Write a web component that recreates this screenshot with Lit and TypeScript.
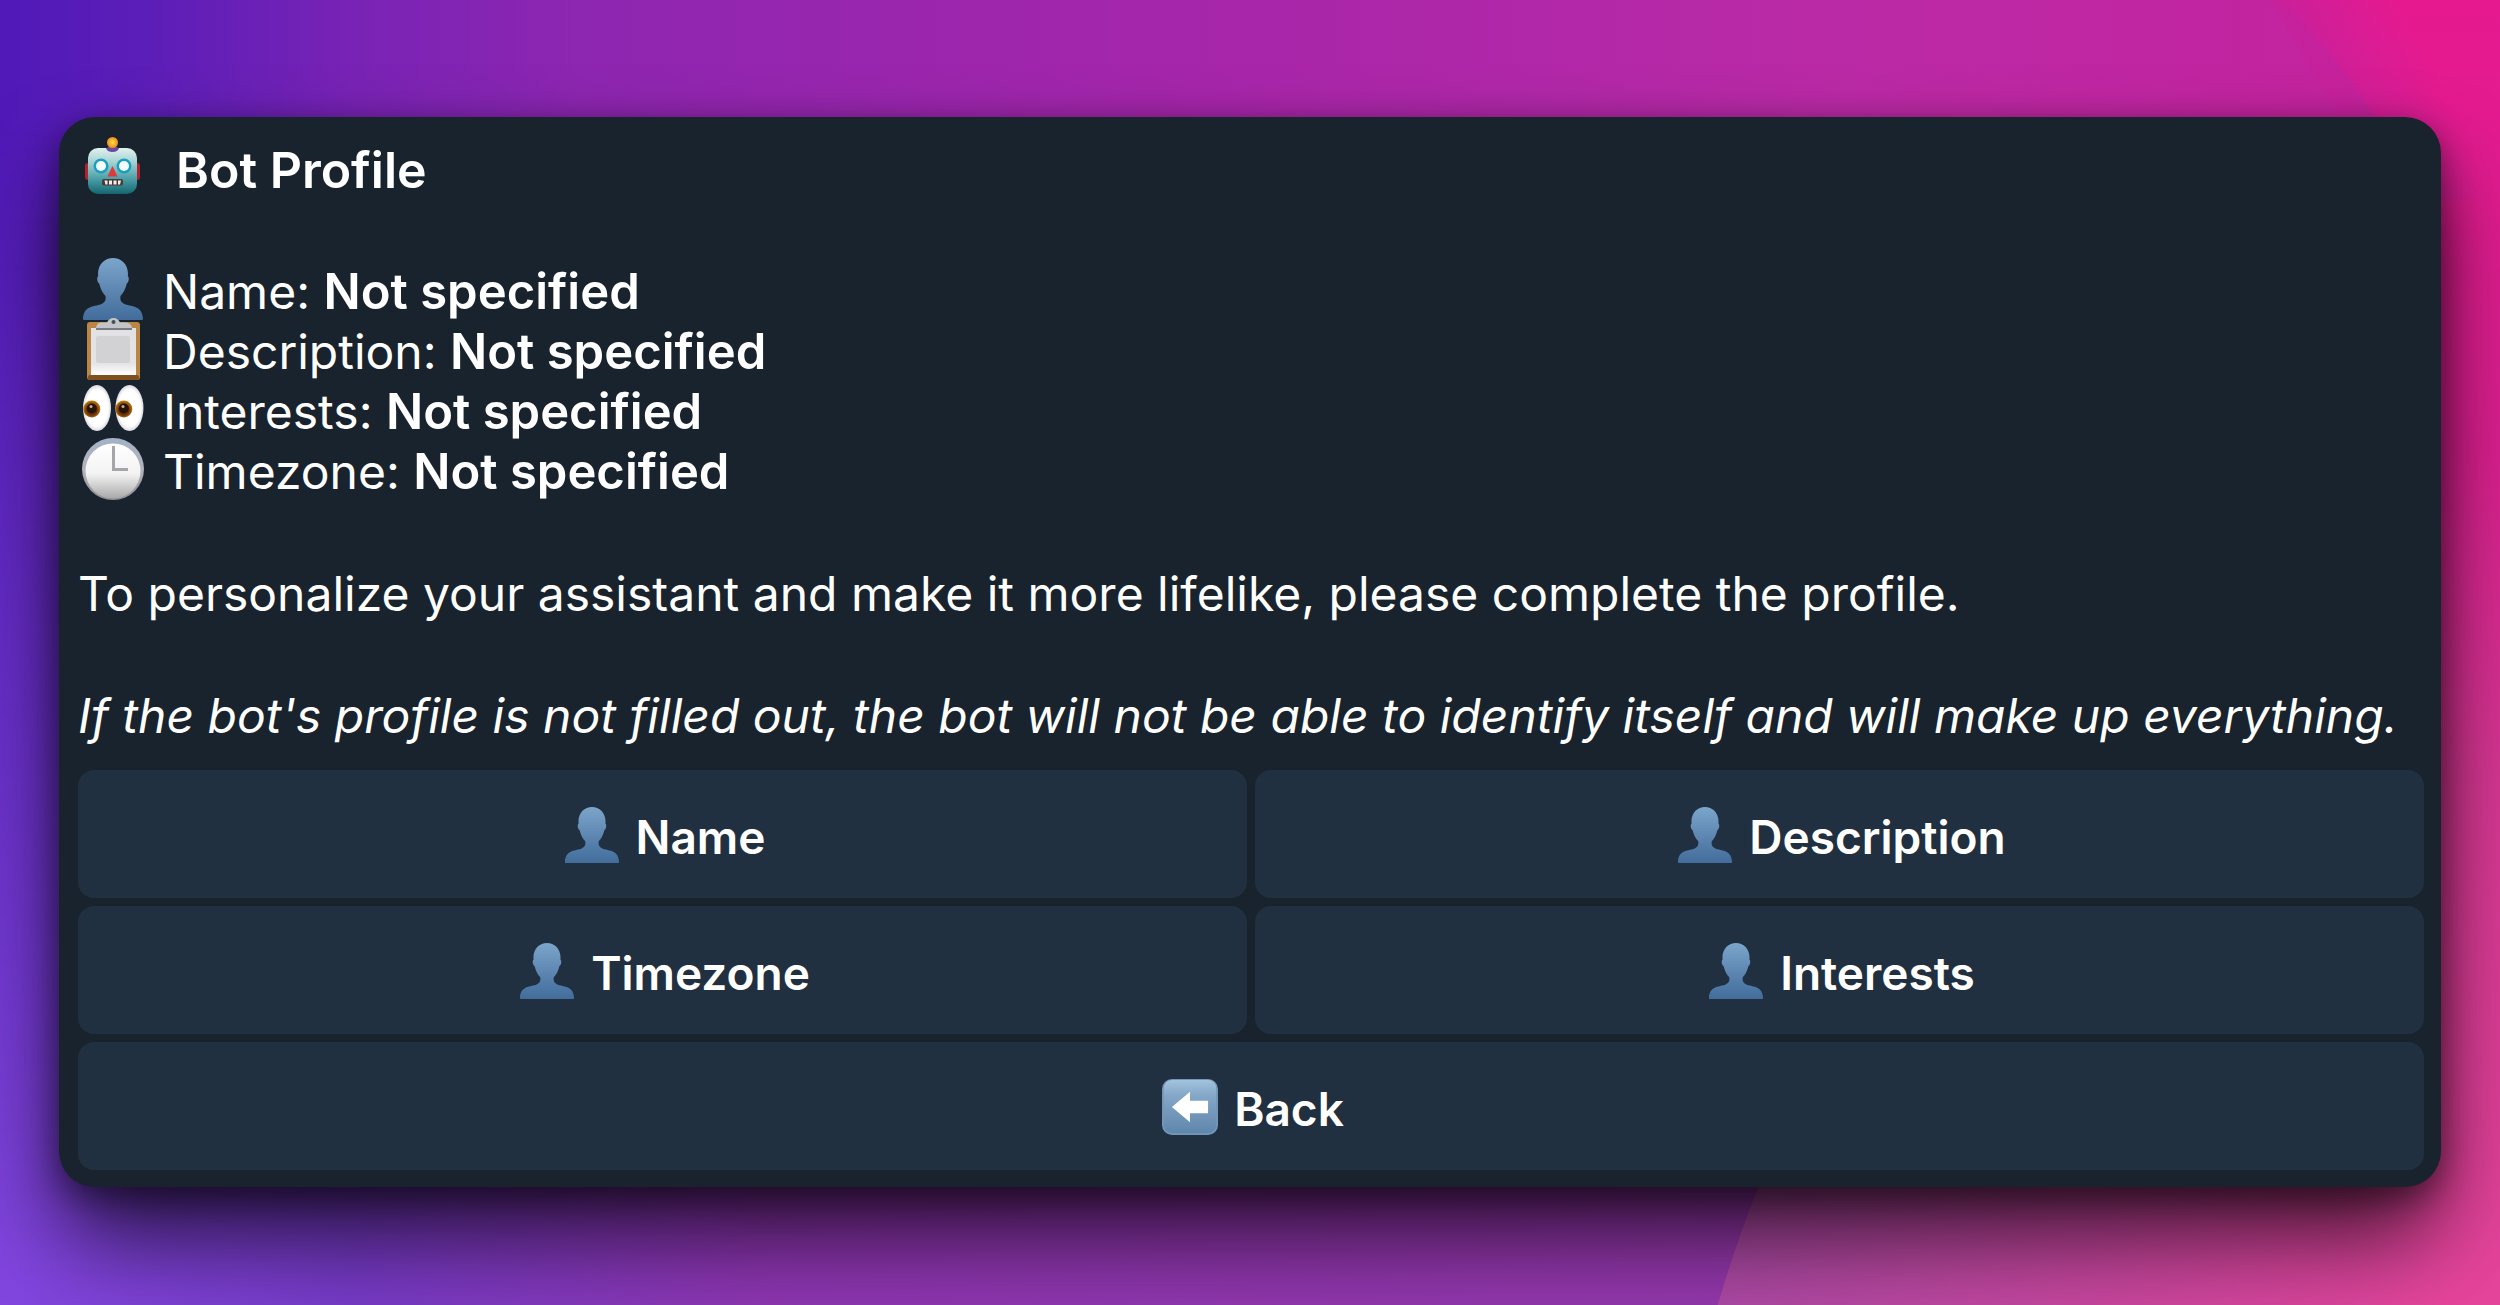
import { LitElement, html, svg, css, TemplateResult } from "lit";
import { customElement, property } from "lit/decorators.js";

type IconName = "robot" | "person" | "clipboard" | "eyes" | "clock" | "back";

/* Every glyph is drawn on a 62 x 62 grid. */
const icons: Record<IconName, TemplateResult> = {
  robot: svg`
    <defs>
      <linearGradient id="head" x1="0" y1="0" x2="0" y2="1">
        <stop offset="0" stop-color="#e2f1ee" /><stop offset=".3" stop-color="#a5d3d3" />
        <stop offset=".65" stop-color="#4fa3aa" /><stop offset="1" stop-color="#14656f" />
      </linearGradient>
      <radialGradient id="knob" cx=".5" cy=".5" r=".5">
        <stop offset="0" stop-color="#ffe24a" /><stop offset="1" stop-color="#f08a1c" />
      </radialGradient>
    </defs>
    <rect x="3" y="27" width="8" height="17" rx="3" fill="#b3202e" />
    <rect x="50" y="27" width="8" height="17" rx="3" fill="#b3202e" />
    <path d="M24 15q0-5 6.500-5t6.500 5z" fill="#6a4a9c" />
    <circle cx="30.500" cy="6.500" r="5.500" fill="url(#knob)" />
    <rect x="6" y="12" width="49" height="46" rx="10" fill="url(#head)" />
    <path d="M24 12h13q-1 4-6.500 4t-6.500-4z" fill="#6a4a9c" />
    <circle cx="19" cy="30" r="7.500" fill="#1b9fc0" /><circle cx="19" cy="30" r="5" fill="#f4feff" />
    <circle cx="42" cy="30" r="7.500" fill="#1b9fc0" /><circle cx="42" cy="30" r="5" fill="#f4feff" />
    <path d="M30.500 30l5 10.500h-10z" fill="#e0393c" />
    <rect x="20" y="43" width="21" height="6.500" rx="2" fill="#4a3a3c" />
    <path d="M22.500 44.500h3v4h-2zM27 44.500h3v4h-3zM31.500 44.500h3v4h-3zM36 44.500h3l-1 4h-2z" fill="#f6efe6" />`,
  person: svg`
    <defs>
      <linearGradient id="body" x1="0" y1="0" x2="0" y2="1">
        <stop offset="0" stop-color="#7ba5ca" /><stop offset="1" stop-color="#426c9b" />
      </linearGradient>
    </defs>
    <path fill="url(#body)" d="M31 0C39 0 46 6 46 16q0 1-.2 2.200c1.600.6 1.200 6.300-1 7.300C43.500 31 41 35.500 38.500 38c-.6 4.500.5 6.500 5 8.500 7 2 17 1.500 17.500 14.500q0 1-1 1H2q-1 0-1-1C1.500 48 11.500 48.500 18.500 46.500c4.500-2 5.600-4 5-8.500C21 35.500 18.500 31 17.200 25.500c-2.200-1-2.600-6.700-1-7.300Q16 17 16 16C16 6 23 0 31 0z" />`,
  clipboard: svg`
    <defs>
      <linearGradient id="sheet" x1="0" y1="0" x2="0" y2="1">
        <stop offset="0" stop-color="#e2e2e4" /><stop offset=".75" stop-color="#e4e4e6" /><stop offset="1" stop-color="#ffffff" />
      </linearGradient>
    </defs>
    <rect x="5" y="4" width="53" height="58" rx="3" fill="#b98645" />
    <rect x="6" y="57" width="51" height="5" rx="2" fill="#80501f" />
    <rect x="9" y="10" width="45" height="47" fill="url(#sheet)" />
    <rect x="14" y="18" width="34" height="27" rx="2" fill="#d2d2d4" />
    <path d="M14 11q0-6 5-6.500h6Q27 0 31.500 0T38 4.500h6q6 .5 6 6.500z" fill="#c3c5c9" />
    <rect x="14" y="10" width="36" height="2" fill="#777b82" />
    <circle cx="31.500" cy="4" r="2" fill="#4a5058" />`,
  eyes: svg`
    <defs>
      <radialGradient id="iris" cx=".5" cy=".55" r=".55">
        <stop offset="0" stop-color="#5a2a08" /><stop offset=".55" stop-color="#6b3305" /><stop offset="1" stop-color="#c9820f" />
      </radialGradient>
      <radialGradient id="white"><stop offset=".8" stop-color="#ffffff" /><stop offset="1" stop-color="#d9d9df" /></radialGradient>
    </defs>
    <ellipse cx="15" cy="30" rx="14" ry="23" fill="url(#white)" />
    <ellipse cx="47.500" cy="30" rx="14" ry="23" fill="url(#white)" />
    <circle cx="9.800" cy="31" r="8.500" fill="url(#iris)" /><circle cx="9.800" cy="30.500" r="5" fill="#26130a" />
    <circle cx="41.800" cy="31" r="8.500" fill="url(#iris)" /><circle cx="41.800" cy="30.500" r="5" fill="#26130a" />
    <circle cx="9" cy="28.500" r="1.500" fill="#c9ab93" /><circle cx="41" cy="28.500" r="1.500" fill="#c9ab93" />`,
  clock: svg`
    <defs>
      <linearGradient id="rim" x1="0" y1="0" x2="0" y2="1">
        <stop offset="0" stop-color="#a3b1c8" /><stop offset=".5" stop-color="#b4b4b9" /><stop offset="1" stop-color="#8f8f92" />
      </linearGradient>
      <linearGradient id="dial" x1="0" y1="0" x2="0" y2="1">
        <stop offset="0" stop-color="#ffffff" /><stop offset=".55" stop-color="#f3f3f3" /><stop offset="1" stop-color="#a9a9ab" />
      </linearGradient>
    </defs>
    <circle cx="31" cy="31" r="31" fill="url(#rim)" />
    <circle cx="31" cy="33" r="27.500" fill="url(#dial)" />
    <path d="M31.500 8v23.500H46" fill="none" stroke="#a6a6aa" stroke-width="3" />`,
  back: svg`
    <defs>
      <linearGradient id="tile" x1="0" y1="0" x2="0" y2="1">
        <stop offset="0" stop-color="#a3c3de" /><stop offset=".3" stop-color="#84a7c8" /><stop offset="1" stop-color="#5f86ac" />
      </linearGradient>
    </defs>
    <rect x="0" y="0" width="62" height="62" rx="11" fill="#7496b8" />
    <rect x="2" y="1" width="58" height="59" rx="9" fill="url(#tile)" />
    <path d="M11 31L31 14V24H51V38H31V48z" fill="#ffffff" />`,
};

@customElement("emoji-icon")
class EmojiIcon extends LitElement {
  @property() name: IconName = "person";

  static styles = css`
    :host { display: block; flex: none; }
    svg { display: block; width: 100%; height: 100%; }
  `;

  render() {
    return html`<svg viewBox="0 0 62 62" aria-hidden="true">${icons[this.name]}</svg>`;
  }
}

const fields: { icon: IconName; label: string; value: string }[] = [
  { icon: "person", label: "Name", value: "Not specified" },
  { icon: "clipboard", label: "Description", value: "Not specified" },
  { icon: "eyes", label: "Interests", value: "Not specified" },
  { icon: "clock", label: "Timezone", value: "Not specified" },
];

const actions: { icon: IconName; label: string; wide?: boolean }[] = [
  { icon: "person", label: "Name" },
  { icon: "person", label: "Description" },
  { icon: "person", label: "Timezone" },
  { icon: "person", label: "Interests" },
  { icon: "back", label: "Back", wide: true },
];

@customElement("app-root")
class AppRoot extends LitElement {
  static styles = css`
    :host {
      display: block;
      font-family: Inter, "Liberation Sans", sans-serif;
    }
    .stage {
      position: relative;
      isolation: isolate;
      box-sizing: border-box;
      min-height: 100vh;
      padding: 117px 59px;
      overflow: hidden;
    }
    .wallpaper {
      position: absolute;
      inset: 0;
      width: 100%;
      height: 100%;
      z-index: -1;
    }
    .card {
      padding: 23px 17px 17px 19px;
      border-radius: 36px;
      background: #19232d;
      color: #ffffff;
      box-shadow: 0 54px 92px -4px rgba(0, 0, 0, 0.7), 0 10px 32px rgba(0, 0, 0, 0.45);
    }
    .message {
      display: flex;
      flex-direction: column;
      gap: 62px;
      font-size: 48px;
      line-height: 60px;
    }
    .title, .field {
      display: flex;
      align-items: center;
      height: 60px;
      margin: 0;
      padding-left: 4px;
      gap: 19px;
      font-size: 48px;
      font-weight: 400;
    }
    .title { gap: 32px; font-size: 50px; font-weight: 600; }
    .fields { margin: 0; padding: 0; list-style: none; }
    .mark { width: 62px; height: 62px; margin-bottom: 6px; }
    .text { margin: 0; }
    .note { font-style: italic; }
    strong { font-weight: 600; }
    .field strong { font-size: 49px; line-height: 1; }
    .keys {
      display: grid;
      grid-template-columns: 1fr 1fr;
      gap: 8px;
      margin-top: 24px;
    }
    .key {
      display: flex;
      align-items: center;
      justify-content: center;
      gap: 16px;
      height: 128px;
      padding: 6px 0 0 4px;
      border: 0;
      border-radius: 16px;
      background: #213040;
      color: #ffffff;
      font: 600 46px/60px Inter, "Liberation Sans", sans-serif;
      cursor: pointer;
    }
    .key:hover { background: #293849; }
    .wide { grid-column: 1 / -1; }
    .glyph { width: 56px; height: 56px; margin-bottom: 4px; }
  `;

  private wallpaper() {
    return html`<svg class="wallpaper" viewBox="0 0 2500 1305" preserveAspectRatio="none" aria-hidden="true">
      <defs>
        <linearGradient id="sky" x1="0" y1="0" x2="1" y2="0">
          <stop offset="0" stop-color="#5019b8" /><stop offset=".06" stop-color="#5c1eb8" />
          <stop offset=".14" stop-color="#7823b5" /><stop offset=".23" stop-color="#8d26b1" />
          <stop offset=".5" stop-color="#a826aa" /><stop offset=".74" stop-color="#bb2aa6" />
          <stop offset="1" stop-color="#c7219c" />
        </linearGradient>
        <linearGradient id="ground" x1="0" y1="0" x2="1" y2="0">
          <stop offset="0" stop-color="#8347e0" /><stop offset=".14" stop-color="#783cca" />
          <stop offset=".3" stop-color="#8f37b4" /><stop offset="1" stop-color="#9a3aaa" />
        </linearGradient>
        <linearGradient id="fade" x1="0" y1="0" x2="0" y2="1">
          <stop offset=".1" stop-color="#000" /><stop offset="1" stop-color="#fff" />
        </linearGradient>
        <mask id="lower"><rect width="2500" height="1305" fill="url(#fade)" /></mask>
        <linearGradient id="rose" x1="0" y1="0" x2="0" y2="1">
          <stop offset="0" stop-color="#e6198f" /><stop offset=".35" stop-color="#dc2090" />
          <stop offset=".6" stop-color="#d83894" /><stop offset="1" stop-color="#e6459c" />
        </linearGradient>
        <linearGradient id="dusk" gradientUnits="userSpaceOnUse" x1="1700" y1="0" x2="2450" y2="0">
          <stop offset="0" stop-color="#ac4aa6" /><stop offset="1" stop-color="#ac4aa6" stop-opacity="0" />
        </linearGradient>
        <linearGradient id="glow" gradientUnits="userSpaceOnUse" x1="2290" y1="50" x2="2400" y2="0">
          <stop offset="0" stop-color="#c7219c" /><stop offset="1" stop-color="#c7219c" stop-opacity="0" />
        </linearGradient>
      </defs>
      <rect width="2500" height="1305" fill="url(#sky)" />
      <rect width="2500" height="1305" fill="url(#ground)" mask="url(#lower)" />
      <path d="M2280 0C2320 40 2360 80 2390 150L1770 1160Q1740 1230 1718 1305H2500V0z" fill="url(#rose)" />
      <path d="M2270 0H2500V200H2390z" fill="url(#glow)" />
      <path d="M1770 1160Q1740 1230 1718 1305H2500V1160z" fill="url(#dusk)" />
    </svg>`;
  }

  render() {
    return html`
      <main class="stage">
        ${this.wallpaper()}
        <section class="card">
          <div class="message">
            <h1 class="title"><emoji-icon class="mark" name="robot"></emoji-icon>Bot Profile</h1>
            <ul class="fields">
              ${fields.map((f) => html`<li class="field">
                <emoji-icon class="mark" name=${f.icon}></emoji-icon>
                <span>${f.label}: <strong>${f.value}</strong></span>
              </li>`)}
            </ul>
            <p class="text">To personalize your assistant and make it more lifelike, please complete the profile.</p>
            <p class="text note">If the bot's profile is not filled out, the bot will not be able to identify itself and will make up everything.</p>
          </div>
          <div class="keys">
            ${actions.map((a) => html`<button type="button" class="key ${a.wide ? "wide" : ""}">
              <emoji-icon class="glyph" name=${a.icon}></emoji-icon>${a.label}
            </button>`)}
          </div>
        </section>
      </main>`;
  }
}
